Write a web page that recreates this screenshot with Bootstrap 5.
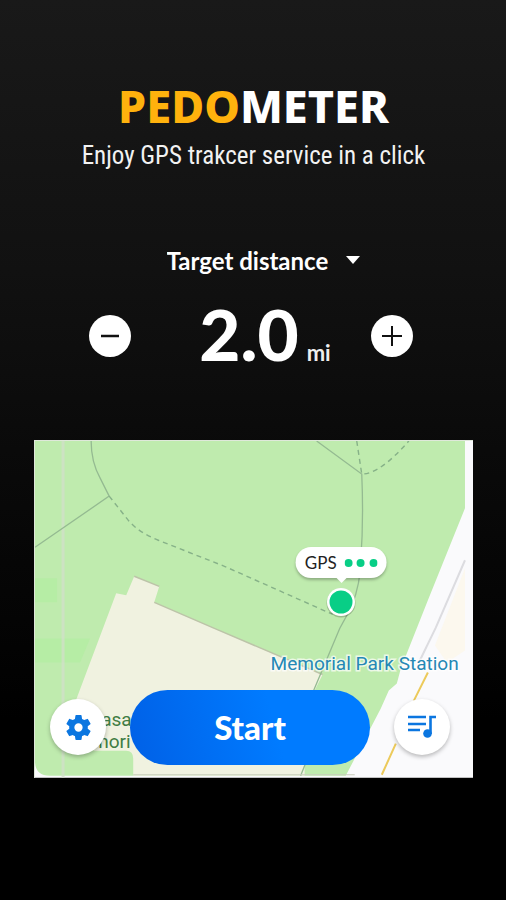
<!DOCTYPE html>
<html lang="en">
<head>
<meta charset="utf-8">
<meta name="viewport" content="width=device-width, initial-scale=1">
<title>Pedometer</title>
<link href="https://cdn.jsdelivr.net/npm/bootstrap@5.3.0/dist/css/bootstrap.min.css" rel="stylesheet">
<style>
  body { background: linear-gradient(#191919, #111 30%, #0a0a0a 50%, #030303 72%, #000 80%) #000; color: #fff; font-family: Lato, sans-serif; }
  .page { padding: 78px 33px 0 34px; }
  .brand { font: 800 45px/56px "Noto Sans", "Open Sans", sans-serif; }
  .brand-accent { color: #ffb20d; }
  .tagline { font: 400 25px/38px "Roboto Condensed", Roboto, sans-serif; color: #f2f2f2; margin-top: 3px; }
  .target { margin-top: 69px; padding-left: 20px; }
  .target-select { appearance: none; background: none; border: 0; color: #fff; font: 700 24px/34px Lato, sans-serif; padding: 0 28px 0 0; width: 194px; }
  .target-select option { color: #000; }
  .caret { width: 16px; margin-left: -16px; pointer-events: none; }
  .stepper { padding: 0 60px 0 55px; margin-top: 14px; }
  .step { width: 42px; height: 42px; color: #111; }
  .reading { padding: 0 0 4px 28px; }
  .distance { font: 900 71px/84px Lato, sans-serif; }
  .unit { font: 700 22px/32px Lato, sans-serif; color: #eee; }
  .map { margin-top: 60px; }
  .map-label { font-family: Roboto, sans-serif; font-size: 19px; }
  .pin { left: 70%; top: 48%; transform: translate(-50%, -50%); }
  .gps-bubble { left: 70%; top: 107px; transform: translateX(-50%); height: 31px; padding: 0 9px; color: #222; font: 400 17px/31px Lato, sans-serif; box-shadow: 0 2px 3px #0004; }
  .gps-bubble::after { content: ""; position: absolute; left: 50%; top: 30px; margin-left: -6px; border: 6px solid transparent; border-top-color: #fff; border-bottom: 0; }
  .controls { padding: 0 23px 13px 16px; }
  .round { width: 56px; height: 56px; color: #0b76e0; box-shadow: 0 2px 4px #0004; }
  .start { width: 240px; height: 75px; background: linear-gradient(75deg, #0060e6, #007bff 60%); font: 900 33px/40px Lato, sans-serif; }
</style>
</head>
<body>
<main class="page min-vh-100">
  <header class="text-center">
    <h1 class="brand m-0"><span class="brand-accent">PEDO</span>METER</h1>
    <p class="tagline mb-0">Enjoy GPS trakcer service in a click</p>
  </header>

  <div class="target d-flex justify-content-center align-items-center">
    <select class="target-select" aria-label="Target type"><option>Target distance</option></select>
    <svg class="caret" viewBox="0 0 16 10" aria-hidden="true"><path d="M1 0h14L8 8z" fill="#fff"/></svg>
  </div>

  <div class="stepper d-flex justify-content-between align-items-center">
    <button class="step btn btn-light bg-white rounded-circle border-0 p-0 d-flex" aria-label="Decrease">
      <svg viewBox="0 0 42 42" stroke="#111" stroke-width="2.500" aria-hidden="true"><path d="M12 21h18"/></svg>
    </button>
    <div class="reading d-flex align-items-baseline gap-2"><span class="distance">2.0</span><span class="unit">mi</span></div>
    <button class="step btn btn-light bg-white rounded-circle border-0 p-0 d-flex" aria-label="Increase">
      <svg viewBox="0 0 42 42" stroke="#111" stroke-width="2" aria-hidden="true"><path d="M11 21h20M21 11v20"/></svg>
    </button>
  </div>

  <section class="map position-relative" aria-label="Map">
    <svg class="d-block w-100" viewBox="0 0 438 337" aria-hidden="true">
      <rect width="438" height="337" fill="#fafafc"/>
      <path d="M1 1H430V68L393 160 366 228 362 243 354 250 346 268 311 335H16Q2 335 1 322z" fill="#bfebae"/>
      <path d="M1 138h22v24H1zM1 198h55l-10 24H1z" fill="#b6eda5"/>
      <path d="M430 128V210L412 222 400 205z" fill="#fcf8ee"/>
      <path d="M29 1V337" stroke="#d2dfca" stroke-width="3" opacity=".75"/>
      <path d="M100 136 125 146 120 162 180 188 288 234 270 270V335H99V318Q99 310 92 310H60L41 262 82 153 92 155z" fill="#f0f2e0"/>
      <path d="M100 136 125 146M120 162 180 188 288 234" fill="none" stroke="#bcc4a8" stroke-width="1.5"/>
      <path d="M57 1Q57 22 66 38L75 56 1 107M282 1 327 34Q329 80 326 120 326 142 317 166L305 188 279 250M266 335 272 320" fill="none" stroke="#94ba91" stroke-width="1.3"/>
      <path d="M75 56 94 80Q104 92 124 100L190 126 298 174M322 1 327 34Q345 34 374 1" fill="none" stroke="#86b188" stroke-width="1.4" stroke-dasharray="5 4"/>
      <path d="M430 120 401 187 384 222" fill="none" stroke="#dcdce0" stroke-width="2"/>
      <path d="M393 232 379 260M361 303 347 334" stroke="#ecca5b" stroke-width="2"/>
      <path d="M99 334H320" stroke="#c9cdbb"/>
      <g class="map-label">
        <text x="236" y="229" fill="#2588b5" stroke="#fff" stroke-opacity=".7" stroke-width="3" paint-order="stroke">Memorial Park Station</text>
        <text x="67" y="285" fill="#3f7d43">asa</text>
        <text x="64" y="307" fill="#3f7d43">nori</text>
      </g>
      <path d="M.5 337V.5H438" fill="none" stroke="#dfe8da"/>
    </svg>

    <div class="gps-bubble position-absolute bg-white rounded-pill d-flex align-items-center gap-2">
      <span>GPS</span>
      <svg width="33" height="8" fill="#08ce86" aria-hidden="true"><circle cx="4" cy="4" r="4"/><circle cx="16" cy="4" r="4"/><circle cx="29" cy="4" r="4"/></svg>
    </div>
    <svg class="pin position-absolute" width="32" height="32" aria-hidden="true"><circle cx="16" cy="17" r="14.500" fill="#0003"/><circle cx="16" cy="16" r="14" fill="#fff"/><circle cx="16" cy="16" r="11.500" fill="#08ce86"/></svg>

    <div class="controls position-absolute bottom-0 start-0 w-100 d-flex justify-content-between align-items-center">
      <button class="round btn bg-white rounded-circle border-0 p-0 d-flex align-items-center justify-content-center" aria-label="Settings">
        <svg width="31" height="31" viewBox="0 0 24 24" fill="currentColor" aria-hidden="true"><path d="M19.140 12.940c.04-.3.060-.61.060-.94s-.02-.64-.07-.94l2.030-1.580a.49.490 0 0 0 .12-.61l-1.920-3.320a.488.488 0 0 0-.59-.22l-2.390.96c-.5-.38-1.030-.7-1.620-.94l-.36-2.540a.484.484 0 0 0-.48-.41h-3.840c-.24 0-.43.170-.47.410l-.36 2.540c-.59.240-1.130.57-1.620.94l-2.390-.96c-.22-.08-.47 0-.59.220L2.740 8.870c-.12.210-.08.470.12.610l2.030 1.580c-.05.3-.09.630-.09.940s.02.640.07.940l-2.030 1.580a.49.490 0 0 0-.12.610l1.920 3.320c.12.220.37.290.59.220l2.390-.96c.5.380 1.030.7 1.620.94l.36 2.540c.05.240.24.410.48.410h3.840c.24 0 .44-.17.470-.41l.36-2.540c.59-.24 1.130-.56 1.620-.94l2.390.96c.22.080.47 0 .59-.22l1.920-3.320c.12-.22.070-.47-.12-.61l-2.010-1.580zM12 15.200a3.200 3.200 0 1 1 0-6.400 3.200 3.200 0 0 1 0 6.400z"/></svg>
      </button>
      <button class="start btn rounded-pill border-0 text-white p-0">Start</button>
      <button class="round btn bg-white rounded-circle border-0 p-0 d-flex align-items-center justify-content-center" aria-label="Playlist">
        <svg width="32" height="28" viewBox="0 0 32 28" fill="none" stroke="currentColor" stroke-width="2.600" aria-hidden="true"><path d="M2 4h18M2 11h18M2 17h12M30 4h-5.500v17"/><circle cx="21.500" cy="20.500" r="4.300" fill="currentColor" stroke="none"/></svg>
      </button>
    </div>
  </section>
</main>
<script src="https://cdn.jsdelivr.net/npm/bootstrap@5.3.0/dist/js/bootstrap.bundle.min.js"></script>
</body>
</html>
